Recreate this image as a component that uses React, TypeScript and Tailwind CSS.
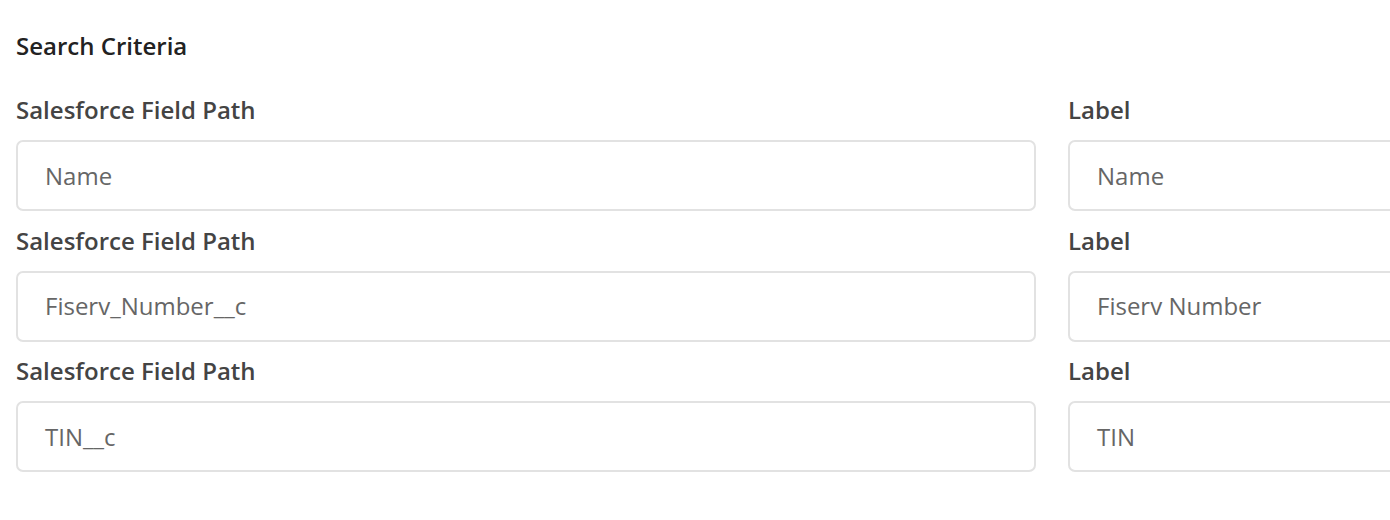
const rows = [
  { path: 'Name', label: 'Name' },
  { path: 'Fiserv_Number__c', label: 'Fiserv Number' },
  { path: 'TIN__c', label: 'TIN' },
];

function Field({ title, value }: { title: string; value: string }) {
  return (
    <div className="flex flex-col">
      <span className="h-[30px] text-[24px] leading-[30px] font-semibold text-[#444444]">{title}</span>
      <div className="mt-[15px] flex h-[71px] items-center rounded-[7px] border-2 border-[#e2e2e2] bg-white pl-[27px] text-[24px] text-[#666666]">
        {value}
      </div>
    </div>
  );
}

export default function App() {
  return (
    <div
      className="h-[520px] w-[1390px] overflow-hidden bg-white pl-4 pt-[31px]"
      style={{ fontFamily: '"Open Sans", sans-serif' }}
    >
      <h2 className="h-[30px] text-[24px] leading-[30px] font-semibold text-[#222222]">Search Criteria</h2>
      <div className="mt-[34px] flex flex-col gap-[14.5px]">
        {rows.map((r) => (
          <div key={r.path} className="grid grid-cols-[1020px_1020px] gap-8">
            <Field title="Salesforce Field Path" value={r.path} />
            <Field title="Label" value={r.label} />
          </div>
        ))}
      </div>
    </div>
  );
}
